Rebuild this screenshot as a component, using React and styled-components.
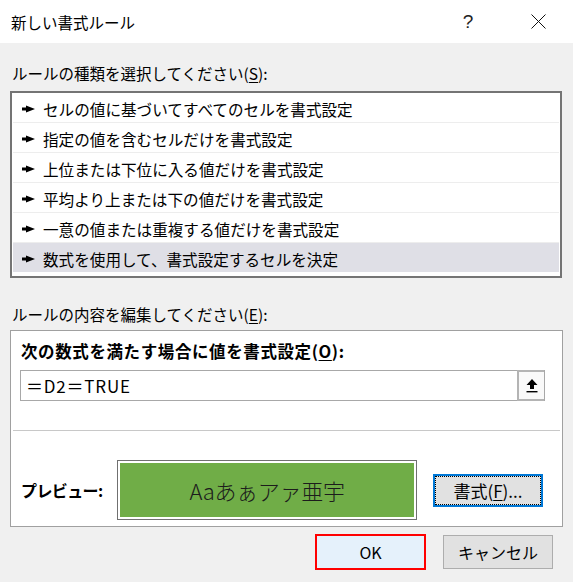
import styled, { createGlobalStyle } from 'styled-components'

const GlobalStyle = createGlobalStyle`
  html, body {
    margin: 0;
    padding: 0;
    background: #f0f0f0;
  }
  body {
    font-family: "Noto Sans CJK JP", "Noto Sans", sans-serif;
    color: #000;
  }
`

const Dialog = styled.div`
  width: 573px;
  height: 582px;
  background: #f0f0f0;
  overflow: hidden;
`

const TitleBar = styled.div`
  height: 43px;
  background: #fff;
  display: flex;
  align-items: center;
  padding-left: 11px;
`

const Title = styled.div`
  flex: 1;
  font-size: 15.5px;
  line-height: 20px;
`

const CaptionButton = styled.div`
  width: 70px;
  height: 43px;
  display: flex;
  align-items: center;
  justify-content: center;
  font-family: "Liberation Sans", sans-serif;
  font-size: 19px;
  color: #222;
`

const Body = styled.div`
  padding: 0 10px;
`

const SectionLabel = styled.div`
  font-size: 15.5px;
  line-height: 20px;
  margin-top: ${(p) => p.$top}px;
  margin-bottom: ${(p) => p.$bottom}px;
  padding-left: 2px;

  u {
    text-underline-offset: 2px;
  }
`

const RuleList = styled.div`
  border: 2px solid #747474;
  background: #fff;
  padding: 0 1px 4px 1px;
  margin-right: 1px;
`

const RuleRow = styled.div`
  display: flex;
  align-items: center;
  gap: 8px;
  padding-left: 9px;
  padding-top: 2px;
  box-sizing: border-box;
  font-size: 15.6px;
  background: ${(p) => (p.$selected ? '#dfdfe6' : '#fff')};
  border-bottom: ${(p) => (p.$last ? 'none' : '1px solid #ededed')};
  height: ${(p) => (p.$last ? 29 : 30)}px;
`

const Panel = styled.div`
  border: 1px solid #a0a0a0;
  background: #fff;
  padding: 10px 0 6px 0;
`

const BoldLabel = styled.div`
  font-size: 16.5px;
  font-weight: 700;
  line-height: 20px;
  padding-left: 10px;
  letter-spacing: 0.6px;

  u {
    text-underline-offset: 2px;
  }
`

const FormulaField = styled.div`
  margin: 9px 0 0 9px;
  width: 525px;
  height: 31px;
  box-sizing: border-box;
  border: 1px solid #a8a8a8;
  display: flex;
  align-items: stretch;
`

const FormulaText = styled.div`
  flex: 1;
  display: flex;
  align-items: center;
  padding-left: 5px;
  font-size: 17px;
  letter-spacing: 0.8px;
`

const PickButton = styled.div`
  width: 27px;
  box-sizing: border-box;
  border: 2px solid #b4b4b4;
  border-right: none;
  margin: -1px 0;
  background: #f9f9f9;
  display: flex;
  align-items: center;
  justify-content: center;
`

const Divider = styled.div`
  height: 1px;
  background: #c8c8c8;
  margin: 29px 2px 0 2px;
`

const PreviewRow = styled.div`
  display: flex;
  align-items: center;
  margin-top: 29px;
  padding-left: 10px;
`

const PreviewLabel = styled.div`
  width: 96px;
  font-size: 16px;
  font-weight: 700;
  letter-spacing: -0.6px;
`

const PreviewBox = styled.div`
  width: 300px;
  height: 60px;
  box-sizing: border-box;
  border: 1px solid #707070;
  padding: 2px;
  background: #fff;
`

const PreviewFill = styled.div`
  height: 100%;
  background: #70ad47;
  display: flex;
  align-items: center;
  justify-content: center;
  font-size: 22px;
  font-weight: 300;
  color: #1c1c1c;
  letter-spacing: -0.3px;
`

const Button = styled.div`
  box-sizing: border-box;
  display: flex;
  align-items: center;
  justify-content: center;
  width: ${(p) => p.$w}px;
  height: ${(p) => p.$h}px;
  font-size: ${(p) => p.$size || 16}px;
  background: ${(p) => p.$bg || '#e1e1e1'};
  border: ${(p) => p.$border || '1px solid #adadad'};

  u {
    text-underline-offset: 2px;
  }
`

const FocusRing = styled.div`
  box-sizing: border-box;
  width: 100%;
  height: 100%;
  border: 1px dotted #000;
  display: flex;
  align-items: center;
  justify-content: center;
`

const FormatButtonWrap = styled.div`
  margin-left: 16px;
`

const Footer = styled.div`
  display: flex;
  justify-content: flex-end;
  align-items: center;
  gap: 17px;
  margin-top: 7px;
  padding-right: 10px;
`

// list bullet: thick tail running into a wide wedge
const Pointer = () => (
  <svg width="13" height="8" viewBox="0 0 13 8">
    <path d="M0 2.5 H4 V0.5 L13 4 L4 7.5 V5.5 H0 Z" fill="#000" />
  </svg>
)

const UpArrow = () => (
  <svg width="12" height="14" viewBox="0 0 12 14">
    <path d="M6 0 L11.5 6 H8 V10 H4 V6 H0.5 Z" fill="#000" />
    <rect x="0.5" y="12" width="11" height="1.4" fill="#000" />
  </svg>
)

const CloseGlyph = () => (
  <svg width="15" height="15" viewBox="0 0 15 15">
    <path d="M0.5 0.5 L14.5 14.5 M14.5 0.5 L0.5 14.5" stroke="#111" strokeWidth="1" />
  </svg>
)

const rules = [
  'セルの値に基づいてすべてのセルを書式設定',
  '指定の値を含むセルだけを書式設定',
  '上位または下位に入る値だけを書式設定',
  '平均より上または下の値だけを書式設定',
  '一意の値または重複する値だけを書式設定',
  '数式を使用して、書式設定するセルを決定',
]

export default function App() {
  return (
    <Dialog>
      <GlobalStyle />
      <TitleBar>
        <Title>新しい書式ルール</Title>
        <CaptionButton>?</CaptionButton>
        <CaptionButton>
          <CloseGlyph />
        </CaptionButton>
      </TitleBar>

      <Body>
        <SectionLabel $top={20} $bottom={8}>
          ルールの種類を選択してください(<u>S</u>):
        </SectionLabel>
        <RuleList>
          {rules.map((r, i) => (
            <RuleRow key={r} $selected={i === rules.length - 1} $last={i === rules.length - 1}>
              <Pointer />
              {r}
            </RuleRow>
          ))}
        </RuleList>

        <SectionLabel $top={26} $bottom={6}>
          ルールの内容を編集してください(<u>E</u>):
        </SectionLabel>
        <Panel>
          <BoldLabel>
            次の数式を満たす場合に値を書式設定(<u>O</u>):
          </BoldLabel>
          <FormulaField>
            <FormulaText>＝D2＝TRUE</FormulaText>
            <PickButton>
              <UpArrow />
            </PickButton>
          </FormulaField>
          <Divider />
          <PreviewRow>
            <PreviewLabel>プレビュー:</PreviewLabel>
            <PreviewBox>
              <PreviewFill>Aaあぁアァ亜宇</PreviewFill>
            </PreviewBox>
            <FormatButtonWrap>
              <Button $w={110} $h={33} $size={17} $border="2px solid #0078d7">
                <FocusRing>
                  書式(<u>F</u>)...
                </FocusRing>
              </Button>
            </FormatButtonWrap>
          </PreviewRow>
        </Panel>

        <Footer>
          <Button $w={111} $h={36} $bg="#e5f1fb" $border="2px solid #ff0000">
            OK
          </Button>
          <Button $w={110} $h={34}>
            キャンセル
          </Button>
        </Footer>
      </Body>
    </Dialog>
  )
}
